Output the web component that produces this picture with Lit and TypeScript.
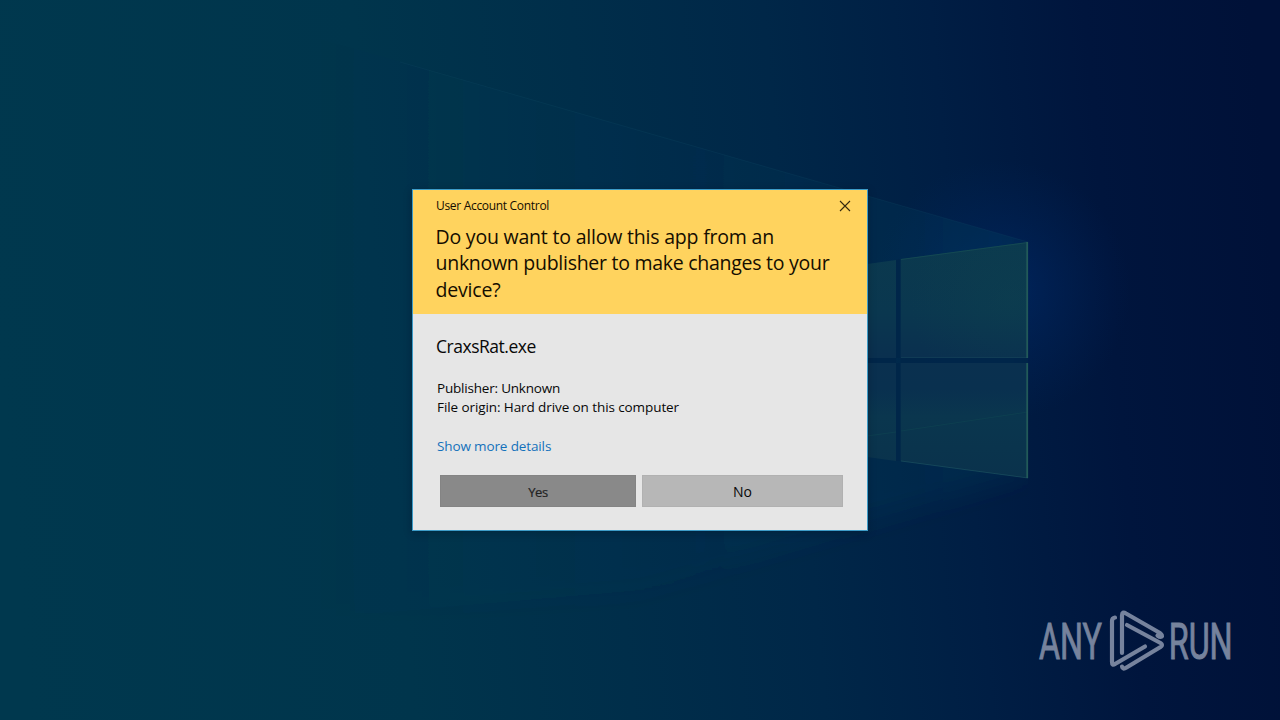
import { LitElement, html, css } from "lit";
import { customElement } from "lit/decorators.js";

@customElement("desktop-wallpaper")
class DesktopWallpaper extends LitElement {
  static styles = css`
    :host { display: block; width: 1280px; height: 720px; }
    svg { display: block; }
  `;
  render() {
    return html`<svg width="1280" height="720" viewBox="0 0 1280 720">
      <defs>
        <linearGradient id="base" x1="0" y1="0" x2="1280" y2="0" gradientUnits="userSpaceOnUse" gradientTransform="rotate(-5 640 360)">
          <stop offset="0" stop-color="#00384e" /><stop offset=".3" stop-color="#00354c" />
          <stop offset=".47" stop-color="#002e4a" /><stop offset=".62" stop-color="#002748" />
          <stop offset=".75" stop-color="#001e44" /><stop offset=".87" stop-color="#00153d" />
          <stop offset="1" stop-color="#001138" />
        </linearGradient>
        <radialGradient id="glow" cx="1000" cy="290" r="130" gradientUnits="userSpaceOnUse">
          <stop offset="0" stop-color="#002f78" stop-opacity=".5" /><stop offset="1" stop-color="#002a68" stop-opacity="0" />
        </radialGradient>
        <linearGradient id="beam" x1="300" y1="0" x2="1030" y2="0" gradientUnits="userSpaceOnUse">
          <stop offset="0" stop-color="#004a66" stop-opacity="0" /><stop offset=".6" stop-color="#004062" stop-opacity=".12" /><stop offset="1" stop-color="#004a62" stop-opacity=".26" />
        </linearGradient>
        <filter id="soft" x="-10%" y="-10%" width="120%" height="120%"><feGaussianBlur stdDeviation="12" /></filter>
        <clipPath id="under"><path d="M300 33 1028 242V720H300Z" /></clipPath>
        <linearGradient id="pane" x1="0" y1="242" x2="0" y2="478" gradientUnits="userSpaceOnUse">
          <stop offset="0" stop-color="#0b394e" /><stop offset=".3" stop-color="#0a374f" /><stop offset=".48" stop-color="#0a304f" />
          <stop offset=".62" stop-color="#09304f" /><stop offset=".74" stop-color="#0a364e" /><stop offset="1" stop-color="#0a324c" />
        </linearGradient>
        <radialGradient id="tint" cx="1010" cy="300" r="100" gradientUnits="userSpaceOnUse">
          <stop offset="0" stop-color="#10464e" stop-opacity=".28" /><stop offset="1" stop-color="#10464e" stop-opacity="0" />
        </radialGradient>
      </defs>
      <rect width="1280" height="720" fill="url(#base)" />
      <rect x="850" y="150" width="330" height="330" fill="url(#glow)" />
      <g clip-path="url(#under)"><path d="M280 0 1024 210V474L640 590 300 620Z" fill="url(#beam)" filter="url(#soft)" /></g>
      <path d="M400 62 1028 242" stroke="#125068" stroke-opacity=".2" fill="none" />
      <path d="M860 265 896 260V358H860ZM900.500 259 1028 242V358H900.500ZM860 363H896V461L860 456ZM900.500 363H1028V478L900.500 461Z" fill="url(#pane)" />
      <path d="M900.500 259 1028 242V358H900.500Z" fill="url(#tint)" />
      <path d="M896 260V461H900.500V259ZM860 358H1028V363H860Z" fill="#002549" fill-opacity=".8" />
      <path d="M860 437 896 432M901 431 1028 412" stroke="#0f4552" stroke-opacity=".6" />
      <path d="M901 259.500 1028 242.500" stroke="#205a58" stroke-opacity=".45" />
      <path d="M1027.200 242V358M1027.200 363V478" stroke="#225a59" stroke-width="1.800" />
      <path d="M1028 478 901 461" stroke="#245d68" stroke-opacity=".5" fill="none" />
      <path d="M901 357.500H1028" stroke="#245d68" stroke-opacity=".25" fill="none" />
    </svg>`;
  }
}

@customElement("brand-mark")
class BrandMark extends LitElement {
  static styles = css`
    :host { display: block; }
    svg { display: block; overflow: visible; }
    .word { font-family: Roboto, sans-serif; font-weight: 400; font-size: 50.500px; fill: #76839d; stroke: #76839d; stroke-width: 1px; }
    .line { fill: none; stroke: #76839d; stroke-width: 4.200; stroke-linecap: round; stroke-linejoin: round; }
  `;
  render() {
    return html`<svg width="210" height="70" viewBox="1035 605 210 70">
      <text class="word" x="1039" y="659.200" textLength="63" lengthAdjust="spacingAndGlyphs">ANY</text>
      <path class="line" d="M1115 617.500Q1112 618 1112 621V662Q1112 666 1115 664L1145 646.500M1122 653V615.500Q1122 611 1126 613.500L1160 633Q1163 635.500 1161.500 636.700Q1160 637.500 1157.500 635.500M1127 625 1160.500 643Q1163.500 645 1160.500 647L1126.500 667.500Q1122.500 670 1122 666.500" />
      <text class="word" x="1168.700" y="659.200" textLength="64" lengthAdjust="spacingAndGlyphs">RUN</text>
    </svg>`;
  }
}

@customElement("consent-dialog")
class ConsentDialog extends LitElement {
  static styles = css`
    :host { display: block; box-sizing: border-box; width: 456px; height: 342px; border: 1px solid #3d9cc8; background: #e6e6e6; color: #080808; font-family: "Open Sans", "Noto Sans", sans-serif; box-shadow: 0 2px 8px rgba(0,10,25,.25); }
    .head { height: 124px; box-sizing: border-box; padding: 6px 14px 0 23px; background: #ffd35e; color: #140d00; }
    .bar { display: flex; justify-content: space-between; align-items: center; height: 18px; }
    .caption { font-size: 12px; letter-spacing: -.31px; }
    .close { display: block; width: 16px; height: 16px; margin-top: 2px; }
    .question { margin: 10px 0 0 -.5px; font-size: 19.500px; line-height: 26.400px; font-weight: 400; letter-spacing: -.2px; white-space: nowrap; }
    .second { letter-spacing: -.27px; }
    .body { padding: 19px 23px 0 23px; }
    .file { font-size: 17.500px; line-height: 26px; letter-spacing: -.48px; }
    .facts { margin: 20px 0 0 1px; font-size: 13.500px; line-height: 19px; letter-spacing: -.2px; }
    .origin { letter-spacing: -.09px; }
    .more { margin: 20px 0 0 1px; font-size: 13.500px; line-height: 19px; letter-spacing: -.13px; color: #1471bb; }
    .actions { display: grid; grid-template-columns: 196px 201px; gap: 6px; margin: 19px 0 0 4px; }
    .btn { display: flex; align-items: center; justify-content: center; height: 32px; box-sizing: border-box; font-size: 14px; background: #b7b7b7; border: 1px solid #b1b1b1; }
    .yes { background: #898989; border-color: #848484; color: #222; font-size: 13px; letter-spacing: -.4px; padding-top: 2px; -webkit-text-stroke: .2px #222; }
  `;
  render() {
    return html`
      <div class="head">
        <div class="bar">
          <span class="caption">User Account Control</span>
          <svg class="close" viewBox="0 0 16 16"><path d="M3 3 13 13M13 3 3 13" stroke="#35290f" stroke-width="1.100" /></svg>
        </div>
        <h1 class="question"><span>Do you want to allow this app from an</span><br /><span class="second">unknown publisher to make changes to your</span><br /><span>device?</span></h1>
      </div>
      <div class="body">
        <div class="file"><span>CraxsRat.exe</span></div>
        <div class="facts"><div><span>Publisher: Unknown</span></div><div class="origin"><span>File origin: Hard drive on this computer</span></div></div>
        <div class="more"><span>Show more details</span></div>
        <div class="actions"><div class="btn yes"><span>Yes</span></div><div class="btn"><span>No</span></div></div>
      </div>`;
  }
}

@customElement("app-root")
class AppRoot extends LitElement {
  static styles = css`
    :host { display: grid; width: 1280px; height: 720px; overflow: hidden; }
    .wall, .stage, .mark { grid-area: 1 / 1; }
    .stage { place-self: center; }
    .mark { place-self: end; margin: 0 35px 45px 0; }
  `;
  render() {
    return html`<desktop-wallpaper class="wall"></desktop-wallpaper>
      <consent-dialog class="stage"></consent-dialog>
      <brand-mark class="mark"></brand-mark>`;
  }
}
